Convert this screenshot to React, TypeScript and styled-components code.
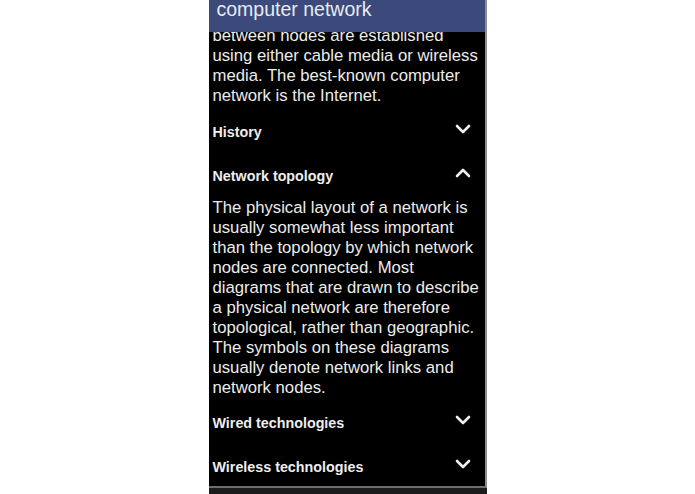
import styled, { createGlobalStyle } from 'styled-components';
import { ChevronDown, ChevronUp } from 'lucide-react';

type Section = {
  title: string,
  open: boolean,
  body?: string,
}

const sections: Section[] = [
  { title: 'History', open: false },
  {
    title: 'Network topology',
    open: true,
    body: 'The physical layout of a network is usually somewhat less important than the topology by which network nodes are connected. Most diagrams that are drawn to describe a physical network are therefore topological, rather than geographic. The symbols on these diagrams usually denote network links and network nodes.',
  },
  { title: 'Wired technologies', open: false },
  { title: 'Wireless technologies', open: false },
];

const GlobalStyle = createGlobalStyle`
  html, body {
    margin: 0;
    padding: 0;
    background: #ffffff;
  }
  body {
    font-family: "Liberation Sans", Arial, sans-serif;
  }
`;

export default function App() {
  return (
    <>
      <GlobalStyle />
      <Page>
        <Column>
          <Panel>
            <AppBar>computer network</AppBar>
            <ScrollArea>
              <Content>
                <Paragraph>
                  between nodes are established using either cable media or wireless media. The best-known computer network is the Internet.
                </Paragraph>
                {sections.map((item, index) => (
                  <div key={`${item.title}-${index}`}>
                    <SectionHeader>
                      <span>{item.title}</span>
                      <Toggle>
                        {item.open
                          ? <ChevronUp size={24} strokeWidth={2.6} />
                          : <ChevronDown size={24} strokeWidth={2.6} />}
                      </Toggle>
                    </SectionHeader>
                    {item.open && item.body && <Paragraph>{item.body}</Paragraph>}
                  </div>
                ))}
              </Content>
            </ScrollArea>
          </Panel>
          <BottomStrip />
        </Column>
      </Page>
    </>
  )
}

const Page = styled.div`
    display: flex;
    justify-content: center;
    height: 494px;
    overflow: hidden;
`;
const Column = styled.div`
    width: 278px;
    display: flex;
    flex-direction: column;
`;
const Panel = styled.div`
    height: 488px;
    box-sizing: border-box;
    background: #000000;
    border-right: 2px solid #8e8e8e;
    border-bottom: 2px solid #6e6e6e;
    display: flex;
    flex-direction: column;
    overflow: hidden;
`;
const AppBar = styled.div`
    flex: 0 0 32px;
    background: #3b4a7b;
    color: #e9eaf0;
    font-size: 19.5px;
    line-height: 18px;
    padding-left: 8px;
    white-space: nowrap;
`;
const ScrollArea = styled.div`
    flex: 1;
    overflow: hidden;
`;
const Content = styled.div`
    /* list is scrolled a few pixels under the bar */
    margin-top: -6px;
`;
const Paragraph = styled.p`
    margin: 0;
    padding: 0 4px 3.5px 4px;
    color: #ececec;
    font-size: 16.7px;
    line-height: 20px;
`;
const SectionHeader = styled.div`
    height: 44px;
    display: flex;
    align-items: center;
    justify-content: space-between;
    padding: 0 10px 0 4px;
    color: #eeeeee;
    font-size: 14.3px;
    font-weight: bold;
`;
const Toggle = styled.span`
    display: flex;
    margin-bottom: 6px;
    color: #eeeeee;
`;
const BottomStrip = styled.div`
    flex: 1;
    background: #1c1c1c;
`;
